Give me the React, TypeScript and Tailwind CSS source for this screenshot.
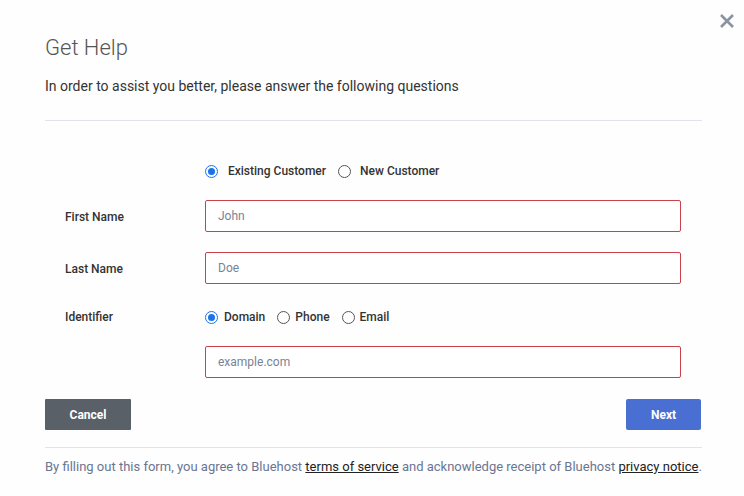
import React from "react";

function Radio({ checked, label, gap }: { checked?: boolean; label: string; gap: string }) {
  return (
    <label className={"flex items-center " + gap}>
      <span
        className={
          checked
            ? "w-[13px] h-[13px] rounded-full border border-[#1a73e8] flex items-center justify-center bg-white"
            : "w-[13px] h-[13px] rounded-full border border-[#555] bg-white"
        }
      >
        {checked && <span className="w-[7px] h-[7px] rounded-full bg-[#1a73e8]" />}
      </span>
      <span className="text-[12px] font-medium text-[#333]">{label}</span>
    </label>
  );
}

function Field({ placeholder }: { placeholder: string }) {
  return (
    <div className="w-[476px] h-[32px] border border-[#c9414a] rounded-[2px] flex items-center px-[12px] text-[12px] text-[#7a8295] bg-white">
      {placeholder}
    </div>
  );
}

export default function App() {
  return (
    <div
      className="relative w-[744px] h-[496px] bg-[#fefefe] overflow-hidden"
      style={{ fontFamily: "Roboto, 'Liberation Sans', sans-serif" }}
    >
      <button className="absolute right-[8px] top-[12px] w-[18px] h-[18px] flex items-center justify-center">
        <svg width="16" height="16" viewBox="0 0 16 16">
          <path d="M2 2 L14 14 M14 2 L2 14" stroke="#8a93a0" strokeWidth="2.6" strokeLinecap="butt" />
        </svg>
      </button>
      <div className="px-[45px] pt-[34px]">
        <h1 className="text-[22px] font-light text-[#555] leading-[28px]">Get Help</h1>
        <p className="mt-[15px] text-[14px] text-[#333] leading-[18px]">
          In order to assist you better, please answer the following questions
        </p>
        <div className="mt-[25px] h-px bg-[#e1e4ea] w-[657px]" />

        <div className="mt-[41px] pl-[160px] flex items-center gap-[12px] h-[18px]">
          <Radio checked label="Existing Customer" gap="gap-[10px]" />
          <Radio label="New Customer" gap="gap-[9px]" />
        </div>

        <div className="mt-[20px] flex items-center">
          <div className="w-[160px] pl-[20px] pt-[2px] text-[12px] font-medium text-[#333]">First Name</div>
          <Field placeholder="John" />
        </div>
        <div className="mt-[20px] flex items-center">
          <div className="w-[160px] pl-[20px] pt-[2px] text-[12px] font-medium text-[#333]">Last Name</div>
          <Field placeholder="Doe" />
        </div>
        <div className="mt-[24px] flex items-center h-[18px]">
          <div className="w-[160px] pl-[20px] text-[12px] font-medium text-[#333]">Identifier</div>
          <div className="flex items-center gap-[12px]">
            <Radio checked label="Domain" gap="gap-[6px]" />
            <Radio label="Phone" gap="gap-[5px]" />
            <Radio label="Email" gap="gap-[5px]" />
          </div>
        </div>
        <div className="mt-[20px] pl-[160px]">
          <Field placeholder="example.com" />
        </div>

        <div className="mt-[21px] flex justify-between w-[656px]">
          <button className="w-[86px] h-[31px] bg-[#596068] text-white text-[12px] font-bold rounded-[1px]">
            Cancel
          </button>
          <button className="w-[75px] h-[31px] bg-[#4a6fd3] text-white text-[12px] font-bold rounded-[2px]">
            Next
          </button>
        </div>
        <div className="mt-[17px] h-px bg-[#e1e4ea] w-[657px]" />
        <p className="mt-[11px] text-[13px] text-[#6b7592] leading-[16px] whitespace-nowrap">
          By filling out this form, you agree to Bluehost{" "}
          <span className="underline text-[#222]">terms of service</span> and acknowledge receipt of Bluehost{" "}
          <span className="underline text-[#222]">privacy notice</span>.
        </p>
      </div>
    </div>
  );
}
